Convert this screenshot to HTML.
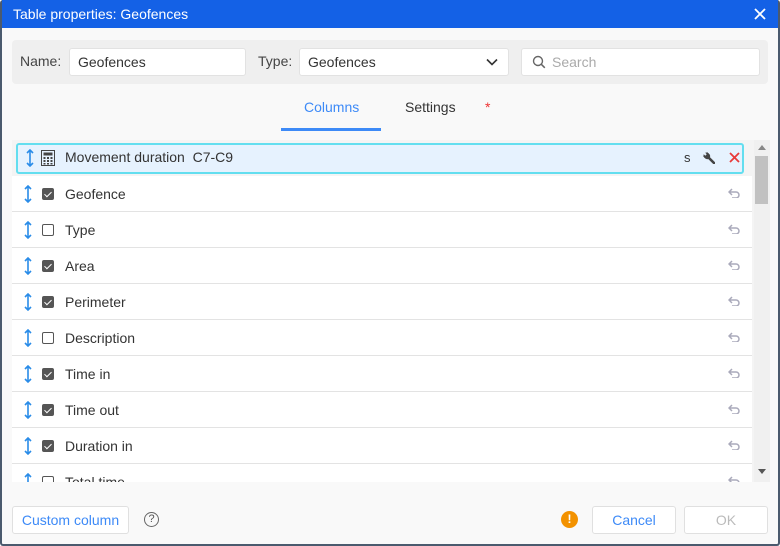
<!DOCTYPE html>
<html><head><style>
*{box-sizing:border-box;margin:0;padding:0}
body{width:780px;height:546px;overflow:hidden;font-family:"Liberation Sans",sans-serif;background:#fff}
.win{position:absolute;left:0;top:0;width:780px;height:546px;border:2px solid #4b5a6e;border-top:none;background:#f9f9f9;border-radius:3px}
.title{position:absolute;left:0;top:0;width:776px;height:28px;background:#1461e6;color:#fff;font-size:14px;line-height:28px;padding-left:11px}
.bar{position:absolute;left:10px;top:40px;width:756px;height:44px;background:#efefef;border-radius:4px;font-size:14px;color:#444}
.inp{position:absolute;top:8px;height:28px;background:#fff;border:1px solid #e2e2e2;border-radius:3px;line-height:26px;padding-left:8px;color:#333}
.lbl{position:absolute;top:0;line-height:42px}
.tabs{font-size:14px}
.row{position:absolute;left:10px;width:740px;height:36px;background:#fff;border-bottom:1px solid #e3e3e3;font-size:14px;color:#333}
.row span.t{position:absolute;left:53px;top:0;line-height:36px}
.cb{position:absolute;left:30px;top:12px;width:12px;height:12px;border:1.5px solid #555;border-radius:2px}
.cb.on{background:#555;border-color:#555}
.cb.on:after{content:"";position:absolute;left:3px;top:0.5px;width:3px;height:6px;border:solid #fff;border-width:0 1.5px 1.5px 0;transform:rotate(45deg)}
.arr{position:absolute;left:12px;top:9px}
.undo{position:absolute;right:12px;top:12px}
.btn{position:absolute;top:506px;height:28px;border:1px solid #e0e0e0;background:#fff;border-radius:3px;font-size:14px;line-height:26px;text-align:center}
</style></head><body>
<div class="win">
<div class="title">Table properties: Geofences
<svg style="position:absolute;right:12px;top:8px" width="12" height="12"><path d="M1 1l10 10M11 1L1 11" stroke="#fff" stroke-width="1.8"/></svg></div>
<div class="bar">
<span class="lbl" style="left:8px">Name:</span>
<div class="inp" style="left:57px;width:177px">Geofences</div>
<span class="lbl" style="left:246px">Type:</span>
<div class="inp" style="left:287px;width:210px">Geofences
<svg style="position:absolute;right:10px;top:9px" width="12" height="8"><path d="M1 1.5l5 5 5-5" stroke="#333" stroke-width="1.6" fill="none"/></svg></div>
<div class="inp" style="left:509px;width:239px;padding-left:30px;color:#aaa">Search
<svg style="position:absolute;left:10px;top:6px" width="14" height="14"><circle cx="6" cy="6" r="4.5" stroke="#666" stroke-width="1.4" fill="none"/><path d="M9.3 9.3l3.5 3.5" stroke="#666" stroke-width="1.5"/></svg></div>
</div>
<div class="tabs" style="position:absolute;left:302px;top:99px;color:#3d8af7">Columns</div>
<div style="position:absolute;left:279px;top:128px;width:100px;height:3px;background:#3d8af7"></div>
<div class="tabs" style="position:absolute;left:403px;top:99px;color:#333">Settings</div>
<div style="position:absolute;left:483px;top:99px;color:#e33;font-size:14px">*</div>
<div style="position:absolute;left:10px;top:140px;width:742px;height:342px;overflow:hidden;background:#f4f4f4">
<div class="row" style="top:3px;left:4px;width:728px;height:31px;background:#e6f2fe;border:2px solid #63deef;border-radius:3px">
<svg class="arr" style="left:8px;top:4px" width="8" height="18"><path d="M4 1v16M1 4l3-3 3 3M1 14l3 3 3-3" stroke="#2a8ce8" stroke-width="1.6" fill="none"/></svg>
<svg style="position:absolute;left:23px;top:5px" width="14" height="16"><rect x="0.5" y="0.5" width="13" height="15" fill="none" stroke="#444"/><rect x="2.5" y="2.5" width="9" height="3" fill="#444"/><g fill="#444"><rect x="2.5" y="7" width="2" height="2"/><rect x="6" y="7" width="2" height="2"/><rect x="9.5" y="7" width="2" height="2"/><rect x="2.5" y="10" width="2" height="2"/><rect x="6" y="10" width="2" height="2"/><rect x="9.5" y="10" width="2" height="2"/><rect x="2.5" y="13" width="2" height="1.5"/><rect x="6" y="13" width="2" height="1.5"/><rect x="9.5" y="13" width="2" height="1.5"/></g></svg>
<span style="position:absolute;left:47px;line-height:25px">Movement duration&nbsp;&nbsp;C7-C9</span>
<span style="position:absolute;left:666px;line-height:25px;font-size:13px">s</span>
<svg style="position:absolute;left:684px;top:6px" width="13" height="13"><path d="M12 12L6 6" stroke="#444" stroke-width="2.6" stroke-linecap="round"/><path d="M6.5 2.5A3 3 0 1 1 2.5 6.5L1 5A4.5 4.5 0 0 0 5 1z" fill="#444"/><circle cx="4.5" cy="4.5" r="3" fill="#444"/><path d="M1 1l3 3" stroke="#e6f2fe" stroke-width="2"/></svg>
<svg style="position:absolute;left:711px;top:7px" width="11" height="11"><path d="M1 1l9 9M10 1L1 10" stroke="#e83a3a" stroke-width="1.8"/></svg>
</div>
</div>
<div style="position:absolute;left:10px;top:176px;width:742px;height:306px;overflow:hidden">
<div id="rows"></div>
</div>
<div style="position:absolute;left:752px;top:140px;width:16px;height:342px;background:#f0f0f0">
<div style="position:absolute;left:4px;top:5px;border:4px solid transparent;border-bottom:5px solid #888;border-top:none"></div>
<div style="position:absolute;left:1px;top:16px;width:13px;height:48px;background:#c1c1c1"></div>
<div style="position:absolute;left:4px;top:329px;border:4px solid transparent;border-top:5px solid #555;border-bottom:none"></div>
</div>
<div class="btn" style="left:10px;width:117px;color:#3d8af7">Custom column</div>
<div style="position:absolute;left:142px;top:512px;width:15px;height:15px;border:1.3px solid #666;border-radius:50%;font-size:11px;text-align:center;line-height:13px;color:#555">?</div>
<div style="position:absolute;left:559px;top:511px;width:17px;height:17px;background:#f39200;border-radius:50%;color:#fff;font-size:12px;font-weight:bold;text-align:center;line-height:17px">!</div>
<div class="btn" style="left:590px;width:84px;color:#3d8af7">Cancel</div>
<div class="btn" style="left:682px;width:84px;color:#bbb">OK</div>
</div>
<script>
var d=[["Geofence",1],["Type",0],["Area",1],["Perimeter",1],["Description",0],["Time in",1],["Time out",1],["Duration in",1],["Total time",0]];
var h="";d.forEach(function(r,i){h+='<div class="row" style="left:0;top:'+(i*36)+'px"><svg class="arr" width="8" height="18"><path d="M4 1v16M1 4l3-3 3 3M1 14l3 3 3-3" stroke="#2a8ce8" stroke-width="1.6" fill="none"/></svg><div class="cb'+(r[1]?' on':'')+'"></div><span class="t">'+r[0]+'</span><svg class="undo" width="12" height="10"><path d="M4 1L1 4l3 3M1 4h7a3 3 0 0 1 0 6H4" stroke="#aab" stroke-width="1.5" fill="none"/></svg></div>'});
document.getElementById("rows").innerHTML=h;
</script>
</body></html>
